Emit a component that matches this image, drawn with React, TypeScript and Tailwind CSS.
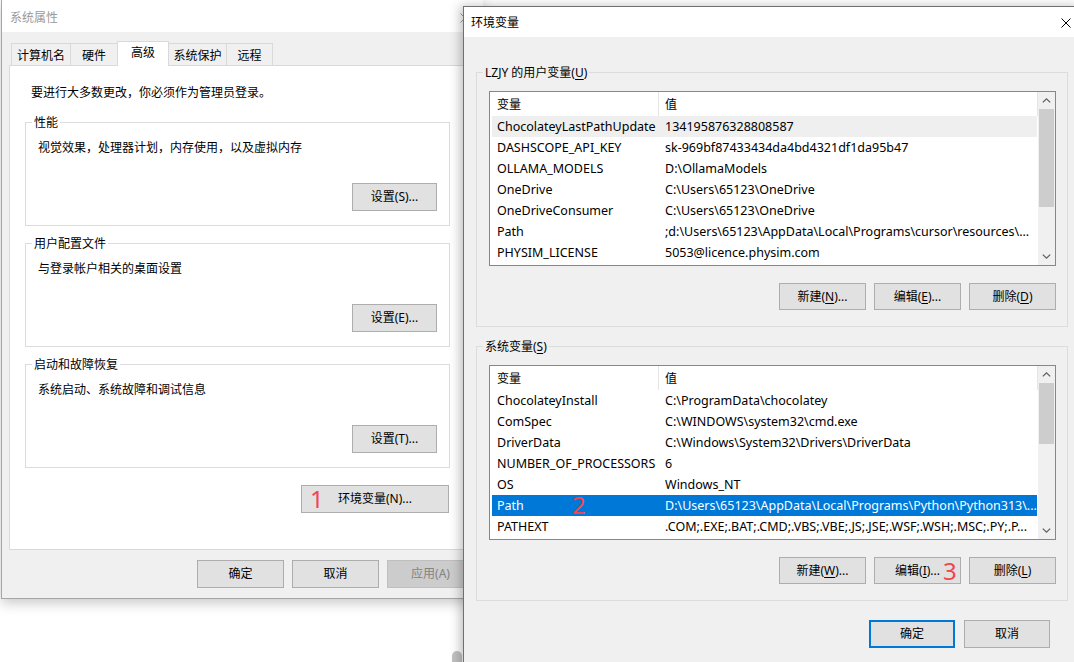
import type { ReactNode } from "react";

type Row = [string, string];

const userVars: Row[] = [
  ["ChocolateyLastPathUpdate", "134195876328808587"],
  ["DASHSCOPE_API_KEY", "sk-969bf87433434da4bd4321df1da95b47"],
  ["OLLAMA_MODELS", "D:\\OllamaModels"],
  ["OneDrive", "C:\\Users\\65123\\OneDrive"],
  ["OneDriveConsumer", "C:\\Users\\65123\\OneDrive"],
  ["Path", ";d:\\Users\\65123\\AppData\\Local\\Programs\\cursor\\resources\\..."],
  ["PHYSIM_LICENSE", "5053@licence.physim.com"],
];

const systemVars: Row[] = [
  ["ChocolateyInstall", "C:\\ProgramData\\chocolatey"],
  ["ComSpec", "C:\\WINDOWS\\system32\\cmd.exe"],
  ["DriverData", "C:\\Windows\\System32\\Drivers\\DriverData"],
  ["NUMBER_OF_PROCESSORS", "6"],
  ["OS", "Windows_NT"],
  ["Path", "D:\\Users\\65123\\AppData\\Local\\Programs\\Python\\Python313\\..."],
  ["PATHEXT", ".COM;.EXE;.BAT;.CMD;.VBS;.VBE;.JS;.JSE;.WSF;.WSH;.MSC;.PY;.P..."],
];

// underlined access key letter
function Key({ children }: { children: ReactNode }) {
  return <span className="underline decoration-1 underline-offset-[2px]">{children}</span>;
}

function Step({ n, className }: { n: string; className: string }) {
  return (
    <span className={`absolute font-['Noto_Sans',sans-serif] text-[24px] leading-none text-[#f0464f] ${className}`}>
      {n}
    </span>
  );
}

function Button({
  children,
  className = "",
  variant = "normal",
}: {
  children: ReactNode;
  className?: string;
  variant?: "normal" | "default" | "disabled";
}) {
  const look =
    variant === "default"
      ? "border-2 border-[#0078d7] bg-[#e1e1e1] text-black"
      : variant === "disabled"
        ? "border border-[#bfbfbf] bg-[#cccccc] text-[#838383]"
        : "border border-[#adadad] bg-[#e1e1e1] text-black";
  return (
    <div className={`relative flex shrink-0 items-center justify-center whitespace-nowrap ${look} ${className}`}>
      {children}
    </div>
  );
}

function GroupBox({
  label,
  labelBg,
  className = "",
  children,
}: {
  label: ReactNode;
  labelBg: string;
  className?: string;
  children: ReactNode;
}) {
  return (
    <div className={`relative shrink-0 border border-[#dcdcdc] ${className}`}>
      <span className={`absolute left-[6px] top-[-8px] px-[2px] leading-[16px] ${labelBg}`}>{label}</span>
      {children}
    </div>
  );
}

function Chevron({ down }: { down?: boolean }) {
  return (
    <svg width="9" height="5" viewBox="0 0 9 5" className={down ? "rotate-180" : ""}>
      <path d="M0.8 4.4 L4.5 0.9 L8.2 4.4" fill="none" stroke="#606060" strokeWidth="1.3" />
    </svg>
  );
}

function CloseIcon({ color }: { color: string }) {
  return (
    <svg width="10" height="10" viewBox="0 0 10 10" className="shrink-0">
      <path d="M0.5 0.5 L9.5 9.5 M9.5 0.5 L0.5 9.5" stroke={color} strokeWidth="1" />
    </svg>
  );
}

function ListView({
  rows,
  thumb,
  highlight = -1,
  selected = -1,
  marker,
}: {
  rows: Row[];
  thumb: string;
  highlight?: number;
  selected?: number;
  marker?: ReactNode;
}) {
  return (
    <div className="flex h-[175px] shrink-0 border border-[#828790] bg-white">
      <div className="flex min-w-0 flex-1 flex-col">
        <div className="flex h-[24px] shrink-0">
          <div className="flex w-[169px] items-center border-r border-[#e5e5e5] pl-[7px] pt-[2px]">变量</div>
          <div className="flex flex-1 items-center border-r border-[#e5e5e5] pl-[6px] pt-[2px]">值</div>
        </div>
        {rows.map(([name, value], i) => (
          <div
            key={name + i}
            className={`relative ml-[2px] mr-[1px] flex h-[21px] shrink-0 items-center text-[12.5px] ${
              i === selected ? "bg-[#0078d7] text-white" : i === highlight ? "bg-[#efefef]" : ""
            }`}
          >
            <div className="w-[166px] shrink-0 overflow-hidden whitespace-nowrap pl-[5px]">{name}</div>
            <div className="min-w-0 flex-1 overflow-hidden whitespace-nowrap pl-[7px]">{value}</div>
            {i === selected && marker}
          </div>
        ))}
      </div>
      <div className="flex w-[17px] shrink-0 flex-col bg-[#f0f0f0]">
        <div className="flex h-[17px] shrink-0 items-center justify-center">
          <Chevron />
        </div>
        <div className={`mx-[1px] shrink-0 bg-[#cdcdcd] ${thumb}`} />
        <div className="flex-1" />
        <div className="flex h-[17px] shrink-0 items-center justify-center">
          <Chevron down />
        </div>
      </div>
    </div>
  );
}

function SettingsGroup({ title, text, button }: { title: string; text: string; button: string }) {
  return (
    <GroupBox label={title} labelBg="bg-white" className="h-[104px] w-[425px]">
      <div className="pl-[12px] pt-[17px]">{text}</div>
      <div className="mt-[27px] flex justify-end pr-[12px]">
        <Button className="h-[28px] w-[85px]">{button}</Button>
      </div>
    </GroupBox>
  );
}

const tabs = [
  { name: "计算机名", w: "w-[60px]" },
  { name: "硬件", w: "w-[48px]" },
  { name: "高级", w: "w-[52px]", active: true },
  { name: "系统保护", w: "w-[59px]" },
  { name: "远程", w: "w-[47px]" },
];

function SystemProperties() {
  return (
    <div className="absolute left-[1px] top-0 flex h-[599px] w-[482px] flex-col border-b border-l border-[#a6a6a6] bg-[#f0f0f0] shadow-[0_4px_12px_rgba(0,0,0,0.22)]">
      <div className="flex h-[32px] shrink-0 items-center bg-white pl-[8px] pt-[4px] text-[#9a9a9a]">
        <span>系统属性</span>
        <span className="ml-auto mr-[13px]">
          <CloseIcon color="#9a9a9a" />
        </span>
      </div>
      <div className="flex flex-1 flex-col px-[7px] pt-[9px]">
        <div className="flex h-[24px] shrink-0 items-end pl-[2px]">
          {tabs.map((t, i) => (
            <div
              key={t.name}
              className={`${t.w} ${i > 0 ? "-ml-px" : ""} flex shrink-0 items-center justify-center border-l border-r border-t border-[#d9d9d9] ${
                t.active ? "relative z-10 -mb-px h-[25px] bg-white pb-[2px]" : "h-[22px] bg-[#f0f0f0] pt-[2px]"
              }`}
            >
              {t.name}
            </div>
          ))}
        </div>
        <div className="flex h-[485px] shrink-0 flex-col border border-[#d9d9d9] bg-white pl-[15px] pt-[19px]">
          <div className="pl-[6px]">要进行大多数更改，你必须作为管理员登录。</div>
          <div className="mt-[21px]">
            <SettingsGroup title="性能" text="视觉效果，处理器计划，内存使用，以及虚拟内存" button="设置(S)..." />
          </div>
          <div className="mt-[17px]">
            <SettingsGroup title="用户配置文件" text="与登录帐户相关的桌面设置" button="设置(E)..." />
          </div>
          <div className="mt-[17px]">
            <SettingsGroup title="启动和故障恢复" text="系统启动、系统故障和调试信息" button="设置(T)..." />
          </div>
          <div className="mt-[17px] flex w-[425px] justify-end pr-[1px]">
            <Button className="h-[28px] w-[148px]">
              环境变量(N)...
              <Step n="1" className="left-[8px] top-[1px]" />
            </Button>
          </div>
        </div>
        <div className="mt-[10px] flex gap-[8px] pl-[188px]">
          <Button className="h-[28px] w-[87px]">确定</Button>
          <Button className="h-[28px] w-[87px]">取消</Button>
          <Button variant="disabled" className="h-[28px] w-[87px]">
            应用(A)
          </Button>
        </div>
      </div>
    </div>
  );
}

function VarButtons({ keys }: { keys: [string, string, string] }) {
  return (
    <div className="mt-[17px] flex justify-end gap-[8px]">
      <Button className="h-[27px] w-[87px]">
        新建(<Key>{keys[0]}</Key>)...
      </Button>
      <Button className="h-[27px] w-[87px]">
        编辑(<Key>{keys[1]}</Key>)...
        {keys[1] === "I" && <Step n="3" className="left-[68px] top-[1px]" />}
      </Button>
      <Button className="h-[27px] w-[87px]">
        删除(<Key>{keys[2]}</Key>)
      </Button>
    </div>
  );
}

function EnvironmentVariables() {
  return (
    <div className="absolute left-[463px] top-[6px] flex h-[700px] w-[618px] flex-col border border-[#707070] bg-[#f0f0f0] shadow-[-3px_0_10px_rgba(0,0,0,0.25)]">
      <div className="flex h-[30px] shrink-0 items-center bg-white pl-[7px] pt-[2px]">
        <span>环境变量</span>
        <span className="ml-auto mr-[9px]">
          <CloseIcon color="#000" />
        </span>
      </div>
      <div className="flex flex-col px-[12px] pt-[35px]">
        <GroupBox
          labelBg="bg-[#f0f0f0]"
          className="pb-[16px] pl-[12px] pr-[11px] pt-[18px]"
          label={
            <>
              LZJY 的用户变量(<Key>U</Key>)
            </>
          }
        >
          <ListView rows={userVars} thumb="h-[98px]" highlight={0} />
          <VarButtons keys={["N", "E", "D"]} />
        </GroupBox>
        <GroupBox
          labelBg="bg-[#f0f0f0]"
          className="mt-[19px] pb-[16px] pl-[12px] pr-[11px] pt-[18px]"
          label={
            <>
              系统变量(<Key>S</Key>)
            </>
          }
        >
          <ListView
            rows={systemVars}
            thumb="h-[61px]"
            selected={5}
            marker={<Step n="2" className="left-[80px] top-[-2px]" />}
          />
          <VarButtons keys={["W", "I", "L"]} />
        </GroupBox>
        <div className="mt-[19px] flex justify-end gap-[9px] pr-[18px]">
          <Button variant="default" className="h-[28px] w-[86px]">
            确定
          </Button>
          <Button className="h-[28px] w-[86px]">取消</Button>
        </div>
      </div>
    </div>
  );
}

export default function App() {
  return (
    <div className="relative h-[662px] w-[1074px] overflow-hidden bg-white font-['Noto_Sans','Noto_Sans_CJK_SC',sans-serif] text-[12px] leading-[16px] text-black">
      <SystemProperties />
      <div className="absolute left-[452px] top-[651px] h-[16px] w-[10px] rounded-full bg-[#c2c2c2]" />
      <EnvironmentVariables />
    </div>
  );
}
